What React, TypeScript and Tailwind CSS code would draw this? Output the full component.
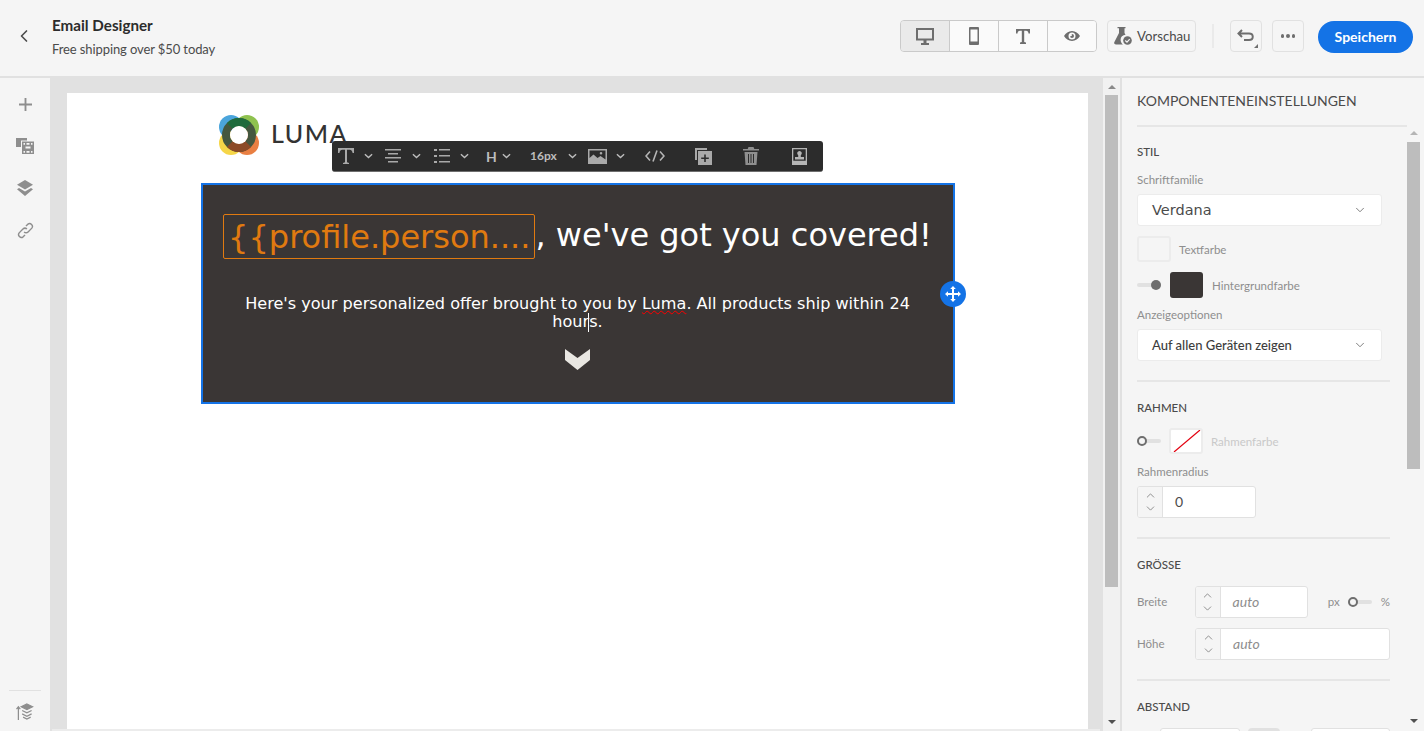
import { ChevronDown, ChevronLeft, ChevronUp } from 'lucide-react'

const rule = 'h-[2px] bg-[#e6e6e6]'
const labelCls = 'text-[11.500px] leading-4 text-[#8e8e8e]'
const headCls = 'text-[11.500px] font-medium leading-4 text-[#4b4b4b]'

function ToolChevron({ className = '' }: { className?: string }) {
  return (
    <svg viewBox="0 0 10 6" className={`w-[9px] h-[6px] shrink-0 ${className}`} fill="none" stroke="#bdbdbd" strokeWidth="1.6">
      <path d="M1 1l4 3.6L9 1" />
    </svg>
  )
}

function Toolbar() {
  return (
    <div className="absolute left-[265px] top-[48px] w-[491px] h-[31px] flex items-center rounded-[3px] bg-[#2c2c2c] border-b border-[#6e6e6e]">
      <svg viewBox="0 0 18 18" className="ml-[5px] w-[18px] h-[18px]" fill="#a9a9a9">
        <path d="M1 1h16v5h-1.4c-.3-2-1-3.3-3-3.3H10v12.6l2 .7v1H6v-1l2-.7V2.7H5.400c-2 0-2.700 1.300-3 3.300H1z" />
      </svg>
      <ToolChevron className="ml-[9px]" />
      <svg viewBox="0 0 16 14" className="ml-[12px] w-[16px] h-[14px]" fill="#a9a9a9">
        <path d="M0 0h16v1.600H0zM3 4h10v1.600H3zM0 8h16v1.600H0zM3 12h10v1.600H3z" />
      </svg>
      <ToolChevron className="ml-[11px]" />
      <svg viewBox="0 0 16 14" className="ml-[13px] w-[16px] h-[14px]" fill="#a9a9a9">
        <path d="M0 0h3v2H0zM5 0h11v1.600H5zM0 6h3v2H0zM5 6h11v1.600H5zM0 12h3v2H0zM5 12h11v1.600H5z" />
      </svg>
      <ToolChevron className="ml-[10px]" />
      <span className="ml-[17px] w-[11px] text-[14px] font-bold text-[#bdbdbd]">H</span>
      <ToolChevron className="ml-[5px]" />
      <span className="ml-[19px] w-[27px] text-[12px] font-bold text-[#bdbdbd]">16px</span>
      <ToolChevron className="ml-[11px]" />
      <svg viewBox="0 0 19 15" className="ml-[11px] w-[19px] h-[15px]" fill="#a9a9a9">
        <path fillRule="evenodd" d="M0 0h19v15H0zM1.500 1.500v7.500l4-3.500 4 3.500 3-2 5 3.500V1.500zM13 3a1.300 1.300 0 110 2.600A1.300 1.300 0 0113 3z" />
      </svg>
      <ToolChevron className="ml-[9px]" />
      <svg viewBox="0 0 20 12" className="ml-[20px] w-[20px] h-[12px]" fill="none" stroke="#b5b5b5" strokeWidth="1.600">
        <path d="M5 1.500L1 6l4 4.500M15 1.500L19 6l-4 4.500M12 .5L8 11.500" />
      </svg>
      <svg viewBox="0 0 17 17" className="ml-[30px] w-[17px] h-[17px]" fill="#a9a9a9">
        <path fillRule="evenodd" d="M0 0h12v2H2v10H0zM3 3h14v14H3zM9.200 6.500v3h-3v1.500h3v3h1.600v-3h3V9.500h-3v-3z" />
      </svg>
      <svg viewBox="0 0 16 18" className="ml-[31px] w-[16px] h-[18px]" fill="#8f8f8f">
        <path d="M5.500 0h5l.8 2H16v1.600H0V2h4.700zM1.500 5h13l-1 13h-11zM5 7v9h1V7zm2.500 0v9h1V7zM10 7v9h1V7z" />
      </svg>
      <svg viewBox="0 0 15 17" className="ml-[33px] w-[15px] h-[17px]" fill="#b5b5b5">
        <path fillRule="evenodd" d="M0 0h15v17H0zM1.300 1.300v11.400h12.400V1.300zM7.500 3a2.300 2.300 0 00-1.300 4.200V9H3v2.500h9V9H8.800V7.200A2.300 2.300 0 007.500 3z" />
      </svg>
    </div>
  )
}

function Stepper({ width, value, italic }: { width: string; value: string; italic?: boolean }) {
  return (
    <div className={`flex h-[32px] ${width} rounded-[3px] border border-[#e1e1e1] bg-white overflow-hidden`}>
      <div className="w-[25px] shrink-0 bg-[#f5f5f5] border-r border-[#e1e1e1] flex flex-col items-center justify-center">
        <ChevronUp className="w-[13px] h-[13px] text-[#7a7a7a]" strokeWidth={1.5} />
        <ChevronDown className="w-[13px] h-[13px] text-[#7a7a7a]" strokeWidth={1.5} />
      </div>
      <span className={italic ? 'pl-[12px] text-[14px] leading-[30px] italic text-[#8e8e8e]' : 'pl-[12px] text-[14px] leading-[30px] text-[#4b4b4b]'}>
        {value}
      </span>
    </div>
  )
}

function Toggle({ on }: { on?: boolean }) {
  return (
    <div className="relative w-[24px] h-[12px] shrink-0">
      <div className="absolute left-0 right-0 top-[4px] h-[4px] rounded-full bg-[#e1e1e1]" />
      {on ? (
        <div className="absolute right-0 top-[1px] w-[10px] h-[10px] rounded-full bg-[#6e6e6e]" />
      ) : (
        <div className="absolute left-0 top-[1px] w-[10px] h-[10px] rounded-full border-2 border-[#6e6e6e] bg-[#f5f5f5]" />
      )}
    </div>
  )
}

function SelectBox({ text, big }: { text: string; big?: boolean }) {
  return (
    <div className="w-[245px] h-[32px] rounded-[3px] border border-[#ececec] bg-white flex items-center pl-[14px] pr-[14px]">
      <span className={big ? "mt-[1px] text-[14.500px] text-[#4b4b4b] [font-family:'DejaVu_Sans',sans-serif]" : 'mt-[1px] text-[13px] font-medium text-[#3c3c3c]'}>{text}</span>
      <ChevronDown className="ml-auto w-[14px] h-[14px] text-[#6e6e6e]" strokeWidth={1.5} />
    </div>
  )
}

function SettingsPanel() {
  return (
    <aside className="relative w-[302px] shrink-0 bg-[#f5f5f5] pl-[15px] overflow-hidden">
      <div className="pt-[14px] w-[270px]">
        <h2 className="text-[14px] leading-[18px] text-[#4b4b4b]">KOMPONENTENEINSTELLUNGEN</h2>
        <div className={`mt-[15px] ${rule}`} />
      </div>

      <div className="w-[253px]">
        <h3 className={`mt-[17px] ${headCls}`}>STIL</h3>
        <p className={`mt-[12px] ${labelCls}`}>Schriftfamilie</p>
        <div className="mt-[6px]"><SelectBox text="Verdana" big /></div>
        <div className="mt-[10px] flex items-center gap-[8px]">
          <div className="w-[34px] h-[26px] rounded-[3px] border-2 border-[#ececec]" />
          <span className={`mt-[2px] ${labelCls}`}>Textfarbe</span>
        </div>
        <div className="mt-[10px] flex items-center">
          <Toggle on />
          <div className="ml-[9px] w-[33px] h-[26px] rounded-[3px] bg-[#3a3635]" />
          <span className={`ml-[9px] mt-[1px] ${labelCls}`}>Hintergrundfarbe</span>
        </div>
        <p className={`mt-[9px] ${labelCls}`}>Anzeigeoptionen</p>
        <div className="mt-[6px]"><SelectBox text="Auf allen Geräten zeigen" /></div>
        <div className={`mt-[19px] ${rule}`} />

        <h3 className={`mt-[18px] ${headCls}`}>RAHMEN</h3>
        <div className="mt-[12px] flex items-center">
          <Toggle />
          <div className="relative ml-[8px] w-[34px] h-[26px] rounded-[3px] border-2 border-[#ececec] bg-white overflow-hidden">
            <svg viewBox="0 0 30 22" className="w-full h-full">
              <path d="M3 22L29 0" stroke="#e3000f" strokeWidth="1.200" />
            </svg>
          </div>
          <span className="ml-[8px] mt-[1px] text-[11.500px] leading-4 text-[#c9c9c9]">Rahmenfarbe</span>
        </div>
        <p className={`mt-[10px] ${labelCls}`}>Rahmenradius</p>
        <div className="mt-[6px]"><Stepper width="w-[119px]" value="0" /></div>
        <div className={`mt-[19px] ${rule}`} />

        <h3 className={`mt-[18px] ${headCls}`}>GRÖSSE</h3>
        <div className="mt-[13px] flex items-center">
          <span className={`w-[58px] ${labelCls}`}>Breite</span>
          <Stepper width="w-[114px]" value="auto" italic />
          <span className={`ml-[20px] ${labelCls}`}>px</span>
          <div className="ml-[8px]"><Toggle /></div>
          <span className={`ml-[9px] ${labelCls}`}>%</span>
        </div>
        <div className="mt-[10px] flex items-center">
          <span className={`w-[58px] ${labelCls}`}>Höhe</span>
          <Stepper width="w-[195px]" value="auto" italic />
        </div>
        <div className={`mt-[19px] ${rule}`} />

        <h3 className={`mt-[18px] ${headCls}`}>ABSTAND</h3>
        <div className="mt-[13px] flex items-start">
          <div className="ml-[23px] w-[80px] h-[32px] rounded-[3px] border border-[#e1e1e1] bg-white" />
          <div className="ml-[8px] w-[32px] h-[32px] rounded-[4px] bg-[#e1e1e1]" />
          <div className="ml-[31px] w-[79px] h-[32px] rounded-[3px] border border-[#e1e1e1] bg-white" />
        </div>
      </div>

      {/* inner scrollbar */}
      <div className="absolute left-[285px] top-[46px] bottom-0 w-[13px] flex flex-col items-center">
        <svg viewBox="0 0 8 4" className="mt-[7px] w-[8px] h-[4px]" fill="#b5b5b5"><path d="M4 0l4 4H0z" /></svg>
        <div className="mt-[7px] w-full h-[327px] bg-[#bdbdbd]" />
        <svg viewBox="0 0 8 4" className="mt-auto mb-[8px] w-[8px] h-[4px]" fill="#505050"><path d="M0 0h8L4 4z" /></svg>
      </div>
    </aside>
  )
}

export default function App() {
  return (
    <div className="w-[1424px] h-[731px] overflow-hidden flex flex-col bg-[#e1e1e1] text-[#2c2c2c] [font-family:Lato,sans-serif]">
      <header className="h-[76px] shrink-0 bg-[#f5f5f5] flex items-center pl-[14px] pr-[11px]">
        <ChevronLeft className="w-[20px] h-[20px] text-[#4b4b4b] mt-[-4px]" strokeWidth={2} />
        <div className="ml-[18px] mt-[-2px]">
          <h1 className="text-[15.200px] font-bold leading-[20px] text-[#2c2c2c]">Email Designer</h1>
          <p className="mt-[4px] text-[13px] tracking-[-0.1px] leading-[20px] text-[#4b4b4b]">Free shipping over $50 today</p>
        </div>

        <div className="ml-auto flex items-center mb-[4px]">
          <div className="flex h-[32px] w-[197px] rounded-[4px] border border-[#cacaca] overflow-hidden">
            <div className="flex-1 flex items-center justify-center bg-[#eaeaea] border-r border-[#cacaca]">
              <svg viewBox="0 0 18 17" className="w-[18px] h-[17px]" fill="#6e6e6e">
                <path fillRule="evenodd" d="M0 0h18v12.500H0zM2 2v8.500h14V2zM7.500 12.500h3V15H13v2H5v-2h2.500z" />
              </svg>
            </div>
            <div className="flex-1 flex items-center justify-center bg-[#fafafa] border-r border-[#cacaca]">
              <svg viewBox="0 0 10 18" className="w-[10px] h-[18px]" fill="#6e6e6e">
                <path fillRule="evenodd" d="M1 0h8a1 1 0 011 1v16a1 1 0 01-1 1H1a1 1 0 01-1-1V1a1 1 0 011-1zM1.500 2.500v12h7v-12z" />
              </svg>
            </div>
            <div className="flex-1 flex items-center justify-center bg-[#fafafa] border-r border-[#cacaca]">
              <svg viewBox="0 0 14 15" className="w-[14px] h-[15px]" fill="#6e6e6e">
                <path d="M0 0h14v4.500h-1.500c-.2-1.800-.8-2.800-2.500-2.800H8.200V13l1.800.5V15H4v-1.500L5.800 13V1.700H4c-1.700 0-2.300 1-2.500 2.800H0z" />
              </svg>
            </div>
            <div className="flex-1 flex items-center justify-center bg-[#fafafa]">
              <svg viewBox="0 0 16 10" className="w-[16px] h-[10px]" fill="#6e6e6e">
                <path fillRule="evenodd" d="M8 0c3.500 0 6.300 2.200 8 5-1.700 2.800-4.500 5-8 5S1.700 7.800 0 5c1.700-2.800 4.500-5 8-5zm0 1.500a3.500 3.500 0 100 7 3.500 3.500 0 000-7zm0 1.500a2 2 0 11-2 2c.6.500 1.500.3 1.800-.2.300-.6.200-1.300-.3-1.700.2-.1.300-.1.500-.1z" />
              </svg>
            </div>
          </div>

          <div className="ml-[10px] flex items-center h-[32px] w-[89px] rounded-[4px] border border-[#e1e1e1] pl-[6px]">
            <svg viewBox="0 0 18 18" className="w-[18px] h-[18px]" fill="#6e6e6e">
              <path d="M3.500 0h8v1.300h-1V6l1 1.800A5 5 0 006.600 13c0 1.900 1 3.500 2.400 4.500H2c-1.500 0-2.300-1.300-1.600-2.600L5 6V1.300H3.500z" />
              <circle cx="13.500" cy="13.500" r="4.300" />
              <path d="M11.300 13.500l1.700 1.700 2.700-3" fill="none" stroke="#f5f5f5" strokeWidth="1.200" />
            </svg>
            <span className="ml-[5px] mt-[1px] text-[13.200px] text-[#4b4b4b]">Vorschau</span>
          </div>

          <div className="ml-[16px] w-[2px] h-[24px] bg-[#eaeaea]" />

          <div className="relative ml-[16px] flex items-center justify-center w-[32px] h-[32px] rounded-[4px] border border-[#e1e1e1]">
            <svg viewBox="0 0 18 14" className="w-[18px] h-[14px]" fill="none" stroke="#6e6e6e" strokeWidth="2">
              <path d="M5 1L1.500 4.500 5 8M2 4.500h10c5 0 5 6.500 0 6.500H7" />
            </svg>
            <svg viewBox="0 0 4 4" className="absolute right-[3px] bottom-[3px] w-[4px] h-[4px]" fill="#6e6e6e"><path d="M4 0v4H0z" /></svg>
          </div>
          <div className="ml-[10px] flex items-center justify-center gap-[2px] w-[32px] h-[32px] rounded-[4px] border border-[#e1e1e1]">
            <span className="w-[3.500px] h-[3.500px] rounded-full bg-[#6e6e6e]" />
            <span className="w-[3.500px] h-[3.500px] rounded-full bg-[#6e6e6e]" />
            <span className="w-[3.500px] h-[3.500px] rounded-full bg-[#6e6e6e]" />
          </div>

          <div className="ml-[14px] mt-[2px] pb-[2px] flex items-center justify-center w-[95px] h-[32px] rounded-full bg-[#1473e6] text-white text-[14px] font-bold">
            Speichern
          </div>
        </div>
      </header>

      <div className="flex-1 min-h-0 mt-[2px] flex">
        <nav className="w-[50px] shrink-0 bg-[#f5f5f5] flex flex-col items-center">
          <svg viewBox="0 0 14 14" className="mt-[20px] w-[13px] h-[13px]" fill="#8e8e8e"><path d="M6 0h2v6h6v2H8v6H6V8H0V6h6z" /></svg>
          <svg viewBox="0 0 18 16" className="mt-[27px] w-[18px] h-[16px]" fill="#8e8e8e">
            <path d="M0 0h11v2.500H5v6.500H0z" />
            <path fillRule="evenodd" d="M6 3.500h12V16H6zM7.500 5v1.800h1.500V5zm7.500 0v1.800h1.500V5zm-4.500 0v1.800h3V5zM7.500 13v1.800h1.500V13zm7.500 0v1.800h1.500V13zm-4.500 0v1.800h3V13zm-1 -4.500v2h5v-2z" />
          </svg>
          <svg viewBox="0 0 16 16" className="mt-[26px] w-[16px] h-[16px]" fill="#8e8e8e">
            <path d="M8 0l8 4.800L8 9.600 0 4.800z" />
            <path d="M2 8l6 3.500L14 8l2 1.200L8 16 0 9.200z" />
          </svg>
          <svg viewBox="0 0 18 18" className="mt-[26px] w-[17px] h-[17px]" fill="none" stroke="#8e8e8e" strokeWidth="1.500">
            <path d="M7.500 10.500c1.200 1.200 3 1.200 4.200 0l4-4a3 3 0 00-4.200-4.200l-2 2" />
            <path d="M10.500 7.500c-1.200-1.200-3-1.200-4.200 0l-4 4a3 3 0 004.200 4.200l2-2" />
          </svg>
          <div className="mt-auto w-[32px] h-[1px] bg-[#e1e1e1]" />
          <svg viewBox="0 0 18 18" className="mt-[12px] mb-[11px] w-[18px] h-[17px]" fill="none" stroke="#8e8e8e" strokeWidth="1.300">
            <path d="M2 18V5M0 6.500L2 4l2 2.500" />
            <path d="M11 1l6 3-6 3-6-3z" fill="#8e8e8e" />
            <path d="M6 8l5 2.500L16 8M6 11.500l5 2.500 5-2.500M7 15l4 2 4-2" />
          </svg>
        </nav>

        <main className="relative flex-1 min-w-0 flex pl-[17px]">
          <div className="relative w-[1021px] mt-[15px] bg-white">
            <div className="flex items-start pl-[152px] pt-[22px] h-[90px]">
              <svg viewBox="0 0 40 40" className="w-[40px] h-[40px] shrink-0">
                <circle cx="12" cy="12" r="12" fill="#4ba5dc" />
                <circle cx="28" cy="12" r="12" fill="#8fc24f" />
                <circle cx="12" cy="28" r="12" fill="#f6d648" />
                <circle cx="28" cy="28" r="12" fill="#e97f42" />
                <circle cx="20" cy="20" r="13" fill="none" stroke="#45573f" strokeWidth="8" />
                <path d="M10.800 10.800a13 13 0 0 1 18.400 0" fill="none" stroke="#1f6b3c" strokeWidth="8" />
                <path d="M29.200 29.200a13 13 0 0 1-18.400 0" fill="none" stroke="#8c4a26" strokeWidth="8" />
                <circle cx="20" cy="20" r="9" fill="#fff" />
              </svg>
              <span className="ml-[12px] mt-[3px] text-[25px] leading-[30px] font-medium tracking-[1.500px] text-[#333]">LUMA</span>
            </div>

            <section className="relative mx-auto w-[754px] h-[221px] border-2 border-[#1473e6] bg-[#3a3635] text-white [font-family:'DejaVu_Sans',sans-serif]">
              <div className="mt-[29px] flex items-center justify-center text-[32px] leading-[45px] whitespace-nowrap">
                <span className="rounded-[2px] border border-[#e07a10] px-[4px] h-[45px] text-[#e07a10]">{'{{profile.person....'}</span>
                <span className="mt-[-3px]">, we&apos;ve got you covered!</span>
              </div>
              <p className="mt-[36px] px-[20px] text-center text-[16.100px] leading-[18px]">
                Here&apos;s your personalized offer brought to you by{' '}
                <span className="underline decoration-wavy decoration-[#ff0000] decoration-1 underline-offset-1">Luma</span>. All products ship within 24 hour
                <span className="relative">
                  <span className="absolute left-[-1px] top-[1px] w-[1px] h-[19px] bg-white" />
                </span>
                s.
              </p>
              <svg viewBox="0 0 25 21" className="mx-auto mt-[18px] w-[25px] h-[21px]" fill="#e9e7e2">
                <path d="M0 0l12.500 9L25 0v11L12.500 21 0 11z" />
              </svg>
              <div className="absolute right-[-13px] top-[96px] w-[26px] h-[26px] rounded-full bg-[#1473e6] flex items-center justify-center">
                <svg viewBox="0 0 16 16" className="w-[16px] h-[16px]" fill="#fff">
                  <path d="M8 0l2.800 3H9v4h4V5.200L16 8l-3 2.800V9H9v4h1.800L8 16l-2.800-3H7V9H3v1.800L0 8l3-2.800V7h4V3H5.200z" />
                </svg>
              </div>
            </section>
            <Toolbar />
          </div>

          {/* canvas scrollbar */}
          <div className="ml-[15px] w-[17px] px-[2px] bg-[#f1f1f1] flex flex-col items-center">
            <svg viewBox="0 0 8 4" className="mt-[7px] w-[8px] h-[4px]" fill="#8a8a8a"><path d="M4 0l4 4H0z" /></svg>
            <div className="mt-[6px] w-[13px] h-[492px] bg-[#bdbdbd]" />
            <svg viewBox="0 0 8 4" className="mt-auto mb-[7px] w-[8px] h-[4px]" fill="#505050"><path d="M0 0h8L4 4z" /></svg>
          </div>
          <div className="absolute left-[2px] right-[22px] bottom-0 h-[2px] bg-[#ececec]" />
        </main>

        <SettingsPanel />
      </div>
    </div>
  )
}
